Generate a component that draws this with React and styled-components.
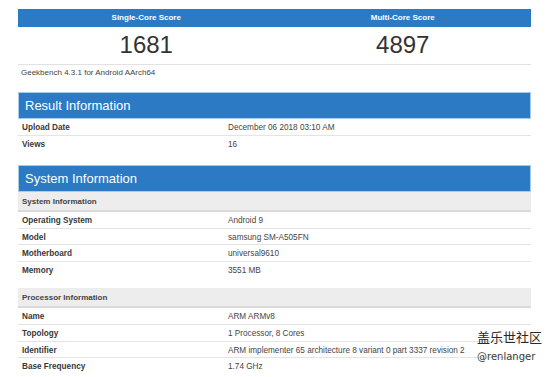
import React from "react";
import styled, { createGlobalStyle } from "styled-components";

const GlobalStyle = createGlobalStyle`
	body {
		margin: 0;
		background: #fff;
		font-family: "Liberation Sans", Arial, sans-serif;
		color: #333;
	}
`;

const BLUE = "#2c7ac3";

const Page = styled.div`
	position: relative;
	width: 550px;
	height: 377px;
	overflow: hidden;
	box-sizing: border-box;
	padding: 9px 19px 0 18px;
`;

const ScoreTable = styled.div`
	display: grid;
	grid-template-columns: 1fr 1fr;
`;

const ScoreHead = styled.div`
	height: 18px;
	line-height: 18px;
	background: ${BLUE};
	color: #fff;
	font-size: 8px;
	font-weight: bold;
	text-align: center;
`;

const ScoreValue = styled.div`
	height: 37px;
	line-height: 35px;
	font-size: 24px;
	color: #333;
	text-align: center;
	border-bottom: 1px solid #e2e2e2;
`;

const Version = styled.div`
	height: 14px;
	line-height: 15px;
	font-size: 8px;
	color: #444;
	padding-left: 3px;
	margin-bottom: 13px;
`;

const Section = styled.div`
	margin-bottom: ${(p) => p.$gap || 0}px;
`;

const SectionHead = styled.div`
	height: 25px;
	line-height: 25px;
	background: ${BLUE};
	border: 1px solid #a7cbea;
	color: #fff;
	font-size: 13px;
	padding-left: 6px;
`;

const SubHead = styled.div`
	height: 18px;
	line-height: 20px;
	background: #ededed;
	border-bottom: 2px solid #d9d9d9;
	font-size: 8px;
	font-weight: bold;
	color: #444;
	padding-left: 4px;
	margin-top: ${(p) => p.$top || 0}px;
`;

const Row = styled.div`
	display: grid;
	grid-template-columns: 210px 1fr;
	height: ${(p) => p.$h || 16.6}px;
	line-height: ${(p) => (p.$h || 16.6) + 1.5}px;
	font-size: 8.2px;
	box-sizing: border-box;
	border-bottom: 1px solid #e4e4e4;
	&:last-child {
		border-bottom: none;
	}
`;

const Label = styled.div`
	font-weight: bold;
	color: #383838;
	padding-left: 4px;
`;

const Value = styled.div`
	color: #444;
	white-space: nowrap;
`;

const Watermark = styled.div`
	position: absolute;
	left: 477px;
	top: 328px;
	font-family: "Noto Sans CJK SC", "Liberation Sans", sans-serif;
	color: #2a2a2a;
`;

const WatermarkTitle = styled.div`
	font-size: 13px;
	line-height: 18px;
`;

const WatermarkUser = styled.div`
	font-family: "DejaVu Sans", sans-serif;
	font-size: 10px;
	line-height: 14px;
	margin-top: 4px;
	color: #3a3a3a;
`;

const InfoRows = ({ rows, h }) =>
	rows.map(([k, v]) => (
		<Row key={k} $h={h}>
			<Label>{k}</Label>
			<Value>{v}</Value>
		</Row>
	));

export default function App() {
	return (
		<Page>
			<GlobalStyle />
			<ScoreTable>
				<ScoreHead>Single-Core Score</ScoreHead>
				<ScoreHead>Multi-Core Score</ScoreHead>
				<ScoreValue>1681</ScoreValue>
				<ScoreValue>4897</ScoreValue>
			</ScoreTable>
			<Version>Geekbench 4.3.1 for Android AArch64</Version>

			<Section $gap={12}>
				<SectionHead>Result Information</SectionHead>
				<div>
					<InfoRows
						h={17}
						rows={[
							["Upload Date", "December 06 2018 03:10 AM"],
							["Views", "16"],
						]}
					/>
				</div>
			</Section>

			<Section>
				<SectionHead>System Information</SectionHead>
				<SubHead>System Information</SubHead>
				<div>
					<InfoRows
						rows={[
							["Operating System", "Android 9"],
							["Model", "samsung SM-A505FN"],
							["Motherboard", "universal9610"],
							["Memory", "3551 MB"],
						]}
					/>
				</div>
				<SubHead $top={10}>Processor Information</SubHead>
				<div>
					<InfoRows
						rows={[
							["Name", "ARM ARMv8"],
							["Topology", "1 Processor, 8 Cores"],
							["Identifier", "ARM implementer 65 architecture 8 variant 0 part 3337 revision 2"],
							["Base Frequency", "1.74 GHz"],
						]}
					/>
				</div>
			</Section>

			<Watermark>
				<WatermarkTitle>盖乐世社区</WatermarkTitle>
				<WatermarkUser>@renlanger</WatermarkUser>
			</Watermark>
		</Page>
	);
}
